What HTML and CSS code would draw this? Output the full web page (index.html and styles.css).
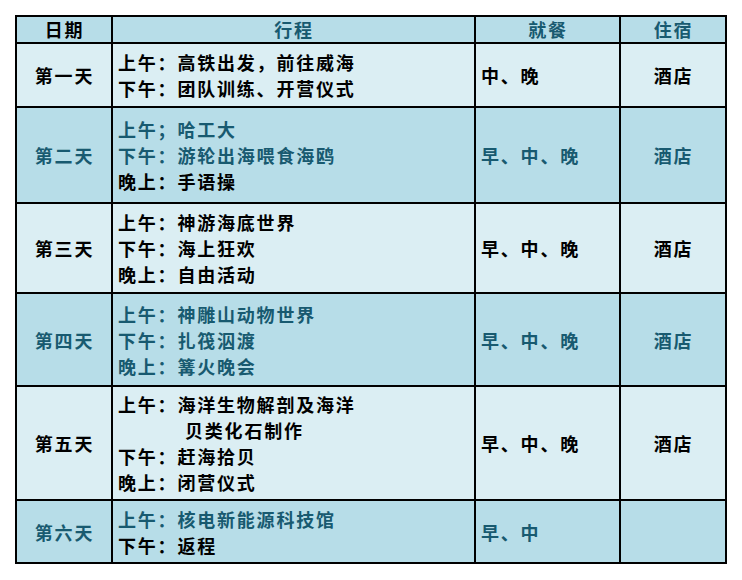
FILE: index.html
```html
<!DOCTYPE html>
<html lang="zh">
<head>
<meta charset="utf-8">
<link rel="stylesheet" href="styles.css">
</head>
<body>
<table class="plan">
  <colgroup>
    <col class="c-day"><col class="c-trip"><col class="c-meal"><col class="c-stay">
  </colgroup>
  <tr class="head">
    <td class="center">日期</td>
    <td class="center teal">行程</td>
    <td class="center teal">就餐</td>
    <td class="center teal">住宿</td>
  </tr>
  <tr class="r1 light">
    <td class="center">第一天</td>
    <td><div>上午：高铁出发，前往威海</div><div>下午：团队训练、开营仪式</div></td>
    <td>中、晚</td>
    <td class="center">酒店</td>
  </tr>
  <tr class="r2 dark">
    <td class="center teal">第二天</td>
    <td><div class="teal">上午；哈工大</div><div class="teal">下午：游轮出海喂食海鸥</div><div>晚上：手语操</div></td>
    <td class="teal">早、中、晚</td>
    <td class="center teal">酒店</td>
  </tr>
  <tr class="r3 light">
    <td class="center">第三天</td>
    <td><div>上午：神游海底世界</div><div>下午：海上狂欢</div><div>晚上：自由活动</div></td>
    <td>早、中、晚</td>
    <td class="center">酒店</td>
  </tr>
  <tr class="r4 dark">
    <td class="center teal">第四天</td>
    <td><div class="teal">上午：神雕山动物世界</div><div class="teal">下午：扎筏泅渡</div><div class="teal">晚上：篝火晚会</div></td>
    <td class="teal">早、中、晚</td>
    <td class="center teal">酒店</td>
  </tr>
  <tr class="r5 light">
    <td class="center">第五天</td>
    <td><div>上午：海洋生物解剖及海洋</div><div class="indent">贝类化石制作</div><div>下午：赶海拾贝</div><div>晚上：闭营仪式</div></td>
    <td>早、中、晚</td>
    <td class="center">酒店</td>
  </tr>
  <tr class="r6 dark">
    <td class="center teal">第六天</td>
    <td><div class="teal">上午：核电新能源科技馆</div><div>下午：返程</div></td>
    <td class="teal">早、中</td>
    <td class="center"></td>
  </tr>
</table>
</body>
</html>
```
FILE: styles.css
```css
html, body {
  margin: 0;
  padding: 0;
  background: #ffffff;
}
body {
  padding: 15px;
  font-family: "Noto Sans CJK SC", "Noto Sans", sans-serif;
  font-size: 18px;
  font-weight: bold;
  color: #000000;
}
.plan {
  border-collapse: separate;
  border-spacing: 0;
  table-layout: fixed;
  width: 712px;
  border-top: 2px solid #000;
  border-left: 2px solid #000;
}
.c-day { width: 96px; }
.c-trip { width: 363px; }
.c-meal { width: 145px; }
.c-stay { width: 106px; }
.plan td {
  border-right: 2px solid #000;
  border-bottom: 2px solid #000;
  padding: 0 0 0 5px;
  vertical-align: middle;
  line-height: 26px;
  letter-spacing: 1.8px;
  white-space: nowrap;
}
.plan td.center {
  text-align: center;
  padding: 0 0 0 1px;
}
.head td { height: 25px; background: #b7dde8; line-height: 25px; }
.light td { background: #dbeef3; }
.dark td { background: #b7dde8; }
.r1 td { height: 62px; }
.r2 td { height: 94px; }
.r3 td { height: 88px; }
.r4 td { height: 91px; }
.r5 td { height: 112px; }
.r6 td { height: 61px; }
.teal { color: #185a70; }
.indent { padding-left: 67px; }
```
